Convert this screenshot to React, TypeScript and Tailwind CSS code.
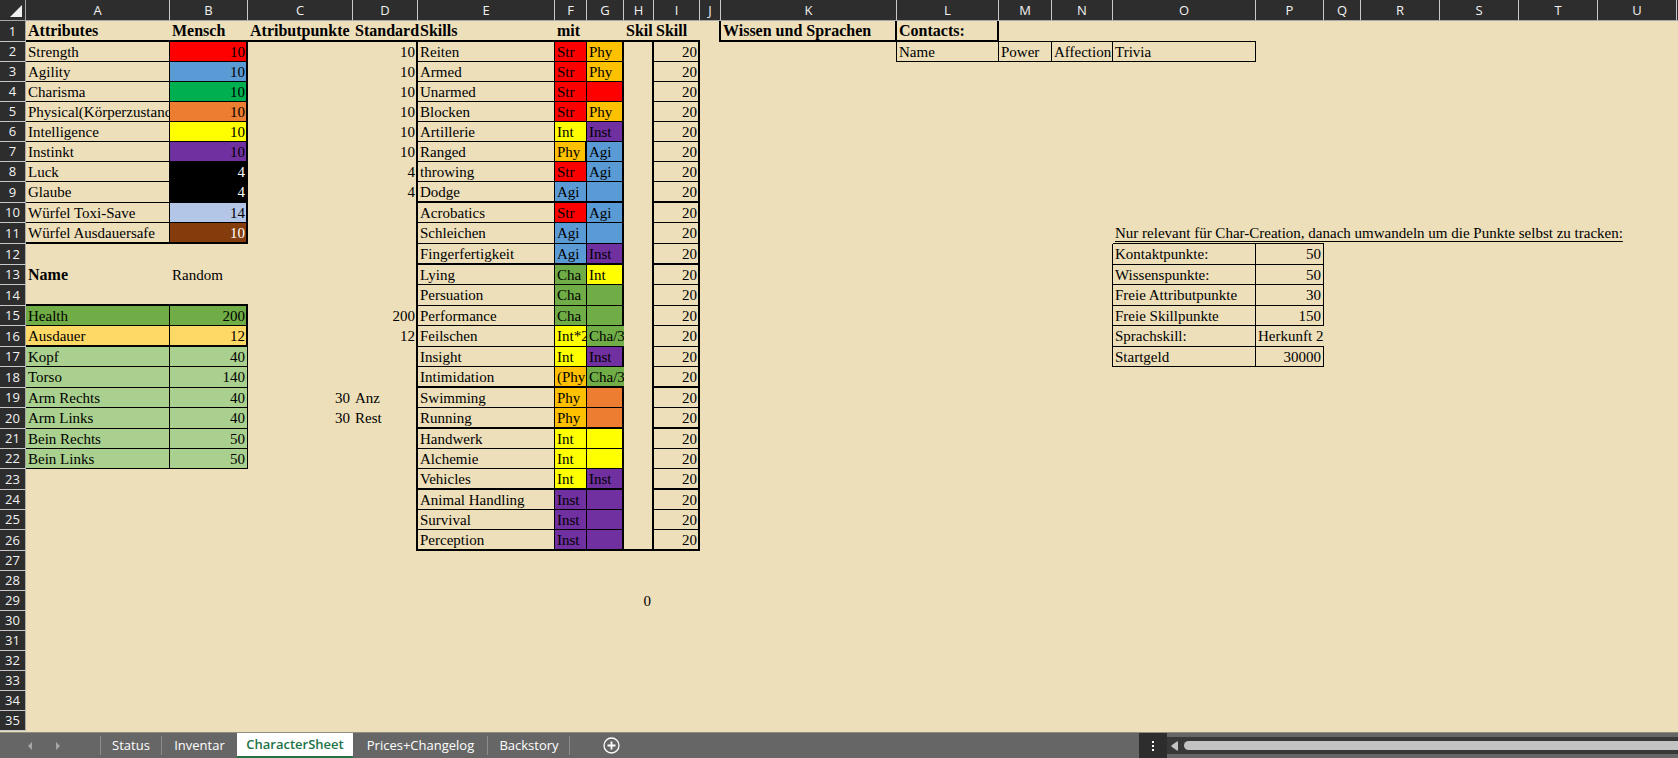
import React from "react";

type Cell = {
  text?: string;
  bg?: string;
  right?: 0 | 1 | 2;
  bottom?: 0 | 1 | 2;
  num?: boolean;
  bold?: boolean;
  white?: boolean;
  clip?: boolean;
  underline?: boolean;
};

const columns = [
  { name: "A", width: "w-[144px]" },
  { name: "B", width: "w-[78px]" },
  { name: "C", width: "w-[105px]" },
  { name: "D", width: "w-[65px]" },
  { name: "E", width: "w-[137px]" },
  { name: "F", width: "w-[32px]" },
  { name: "G", width: "w-[37px]" },
  { name: "H", width: "w-[30px]" },
  { name: "I", width: "w-[46px]" },
  { name: "J", width: "w-[21px]" },
  { name: "K", width: "w-[176px]" },
  { name: "L", width: "w-[102px]" },
  { name: "M", width: "w-[53px]" },
  { name: "N", width: "w-[61px]" },
  { name: "O", width: "w-[143px]" },
  { name: "P", width: "w-[68px]" },
  { name: "Q", width: "w-[37px]" },
  { name: "R", width: "w-[79px]" },
  { name: "S", width: "w-[79px]" },
  { name: "T", width: "w-[79px]" },
  { name: "U", width: "w-[79px]" },
];

const tallRows = [1, 9, 11, 12, 14, 16, 18, 20, 23, 26];
const groupEnds = [9, 12, 18, 20, 23, 26];

const fill = {
  red: "bg-[#ff0000]",
  blue: "bg-[#5b9bd5]",
  emerald: "bg-[#00b050]",
  orange: "bg-[#ed7d31]",
  yellow: "bg-[#ffff00]",
  purple: "bg-[#7030a0]",
  black: "bg-black",
  pale: "bg-[#b4c6e7]",
  brown: "bg-[#843c0c]",
  green: "bg-[#70ad47]",
  gold: "bg-[#ffc000]",
  sand: "bg-[#ffd966]",
  mint: "bg-[#a9d08e]",
};

const cells: Record<string, Cell> = {};
const put = (ref: string, cell: Cell) => {
  cells[ref] = { ...cells[ref], ...cell };
};

"ABCDEFGHI".split("").forEach((c) => put(c + "1", { bottom: 2, bold: true }));
put("A1", { text: "Attributes" });
put("B1", { text: "Mensch" });
put("C1", { text: "Atributpunkte" });
put("D1", { text: "Standard" });
put("E1", { text: "Skills" });
put("F1", { text: "mit" });
put("H1", { text: "Skil" });
put("I1", { text: "Skill" });

const attributes: [string, string, string, boolean?][] = [
  ["Strength", "10", fill.red],
  ["Agility", "10", fill.blue],
  ["Charisma", "10", fill.emerald],
  ["Physical(Körperzustand", "10", fill.orange],
  ["Intelligence", "10", fill.yellow],
  ["Instinkt", "10", fill.purple],
  ["Luck", "4", fill.black, true],
  ["Glaube", "4", fill.black, true],
  ["Würfel Toxi-Save", "14", fill.pale],
  ["Würfel Ausdauersafe", "10", fill.brown, true],
];
attributes.forEach(([name, value, bg, white], i) => {
  const row = i + 2;
  const bottom = row === 11 ? 2 : 1;
  put("A" + row, { text: name, right: 1, bottom, clip: true });
  put("B" + row, { text: value, bg, white, right: 2, bottom, num: true });
  if (row < 10) put("D" + row, { text: value, num: true });
});

put("A13", { text: "Name", bold: true });
put("B13", { text: "Random" });
put("A14", { bottom: 2 });
put("B14", { bottom: 2 });

const body: [string, string, string][] = [
  ["Health", "200", fill.green],
  ["Ausdauer", "12", fill.sand],
  ["Kopf", "40", fill.mint],
  ["Torso", "140", fill.mint],
  ["Arm Rechts", "40", fill.mint],
  ["Arm Links", "40", fill.mint],
  ["Bein Rechts", "50", fill.mint],
  ["Bein Links", "50", fill.mint],
];
body.forEach(([name, value, bg], i) => {
  const row = i + 15;
  const bottom = row === 16 ? 2 : 1;
  put("A" + row, { text: name, bg, right: 1, bottom });
  put("B" + row, { text: value, bg, right: row < 17 ? 2 : 1, bottom, num: true });
});
put("D15", { text: "200", num: true });
put("D16", { text: "12", num: true });
put("C19", { text: "30", num: true });
put("C20", { text: "30", num: true });
put("D19", { text: "Anz" });
put("D20", { text: "Rest" });

const skills: [string, string, string, string, string][] = [
  ["Reiten", "Str", fill.red, "Phy", fill.gold],
  ["Armed", "Str", fill.red, "Phy", fill.gold],
  ["Unarmed", "Str", fill.red, "", fill.red],
  ["Blocken", "Str", fill.red, "Phy", fill.gold],
  ["Artillerie", "Int", fill.yellow, "Inst", fill.purple],
  ["Ranged", "Phy", fill.gold, "Agi", fill.blue],
  ["throwing", "Str", fill.red, "Agi", fill.blue],
  ["Dodge", "Agi", fill.blue, "", fill.blue],
  ["Acrobatics", "Str", fill.red, "Agi", fill.blue],
  ["Schleichen", "Agi", fill.blue, "", fill.blue],
  ["Fingerfertigkeit", "Agi", fill.blue, "Inst", fill.purple],
  ["Lying", "Cha", fill.green, "Int", fill.yellow],
  ["Persuation", "Cha", fill.green, "", fill.green],
  ["Performance", "Cha", fill.green, "", fill.green],
  ["Feilschen", "Int*2", fill.yellow, "Cha/3", fill.green],
  ["Insight", "Int", fill.yellow, "Inst", fill.purple],
  ["Intimidation", "(Phy", fill.gold, "Cha/3", fill.green],
  ["Swimming", "Phy", fill.gold, "", fill.orange],
  ["Running", "Phy", fill.gold, "", fill.orange],
  ["Handwerk", "Int", fill.yellow, "", fill.yellow],
  ["Alchemie", "Int", fill.yellow, "", fill.yellow],
  ["Vehicles", "Int", fill.yellow, "Inst", fill.purple],
  ["Animal Handling", "Inst", fill.purple, "", fill.purple],
  ["Survival", "Inst", fill.purple, "", fill.purple],
  ["Perception", "Inst", fill.purple, "", fill.purple],
];
skills.forEach(([name, first, firstBg, second, secondBg], i) => {
  const row = i + 2;
  const bottom = groupEnds.includes(row) ? 2 : 1;
  put("D" + row, { right: 2 });
  put("E" + row, { text: name, right: 1, bottom });
  put("F" + row, { text: first, bg: firstBg, right: row === 7 ? 2 : 1, bottom, clip: true });
  put("G" + row, { text: second, bg: secondBg, right: second === "Cha/3" ? 0 : 2, bottom, clip: true });
  put("H" + row, { right: 2, bottom: row === 26 ? 2 : 0 });
  put("I" + row, { text: "20", right: 2, bottom, num: true });
});
put("H29", { text: "0", num: true });

put("J1", { right: 2 });
put("K1", { text: "Wissen und Sprachen", bold: true, right: 2, bottom: 2 });
put("L1", { text: "Contacts:", bold: true, right: 2, bottom: 2 });
put("M1", { bottom: 1 });
put("N1", { bottom: 1 });
put("O1", { bottom: 1 });
put("K2", { right: 1 });
put("L2", { text: "Name", right: 1, bottom: 1 });
put("M2", { text: "Power", right: 1, bottom: 1 });
put("N2", { text: "Affection", right: 1, bottom: 1 });
put("O2", { text: "Trivia", right: 1, bottom: 1 });

put("O11", {
  text: "Nur relevant für Char-Creation, danach umwandeln um die Punkte selbst zu tracken:",
  bottom: 1,
  underline: true,
});
put("P11", { bottom: 1 });
const points: [string, string][] = [
  ["Kontaktpunkte:", "50"],
  ["Wissenspunkte:", "50"],
  ["Freie Attributpunkte", "30"],
  ["Freie Skillpunkte", "150"],
  ["Sprachskill:", "Herkunft 2"],
  ["Startgeld", "30000"],
];
points.forEach(([name, value], i) => {
  const row = i + 12;
  const isText = value === "Herkunft 2";
  put("N" + row, { right: 1 });
  put("O" + row, { text: name, right: 1, bottom: 1 });
  put("P" + row, { text: value, right: isText ? 0 : 1, bottom: 1, num: !isText });
});

const rightBorder = ["", "border-r", "border-r-2"];
const bottomBorder = ["", "border-b", "border-b-2"];
// Numbers end on the same line whatever the width of the cell's right border.
const numberPadding = ["pr-[3px]", "pr-[2px]", "pr-px"];

function SheetCell({ cell = {} }: { cell?: Cell }) {
  const right = cell.right ?? 0;
  const classes = [
    "border-black p-0 pt-px align-top whitespace-nowrap leading-[18px]",
    rightBorder[right],
    bottomBorder[cell.bottom ?? 0],
    cell.bg ?? "",
    cell.num ? "text-right " + numberPadding[right] : "pl-[2px] text-left",
    cell.bold ? "text-[16px] font-bold" : "text-[15px]",
    cell.white ? "text-white" : "text-black",
    cell.clip ? "overflow-hidden" : "",
  ].join(" ");
  return (
    <td className={classes}>
      {cell.underline ? <span className="underline underline-offset-[3px]">{cell.text}</span> : cell.text}
    </td>
  );
}

function Sheet() {
  return (
    <table className="w-full table-fixed border-separate border-spacing-0 font-['Liberation_Serif',serif]">
      <colgroup>
        <col className="w-[26px]" />
        {columns.map((c) => (
          <col key={c.name} className={c.width} />
        ))}
        <col />
      </colgroup>
      <thead className="bg-[#2d2d2d] font-['Open_Sans',sans-serif] text-[13px] text-[#f2f2f2]">
        <tr className="h-[21px]">
          <th className="border-r border-b border-[#a8a8a8] p-0">
            <svg viewBox="0 0 12 12" className="mt-px mr-[3px] ml-auto size-3" aria-label="Select all">
              <path d="M12 0V12H0Z" fill="#f0f0f0" />
            </svg>
          </th>
          {columns.map((c) => (
            <th
              key={c.name}
              scope="col"
              className="border-r border-b border-r-[#c8c8c8] border-b-[#a8a8a8] p-0 leading-5 font-normal"
            >
              {c.name}
            </th>
          ))}
          <td className="border-b border-[#a8a8a8] p-0" />
        </tr>
      </thead>
      <tbody>
        {Array.from({ length: 35 }, (_, i) => i + 1).map((row) => (
          <tr key={row} className={tallRows.includes(row) ? "h-[21px]" : "h-5"}>
            <th
              scope="row"
              className="border-r border-b border-r-[#a8a8a8] border-b-[#c8c8c8] bg-[#2d2d2d] p-0 font-['Open_Sans',sans-serif] text-[13px] leading-[19px] font-normal text-[#f2f2f2]"
            >
              {row}
            </th>
            {columns.map((c) => (
              <SheetCell key={c.name} cell={cells[c.name + row]} />
            ))}
            <td className="p-0" />
          </tr>
        ))}
      </tbody>
    </table>
  );
}

const tabs = [
  { name: "Status", width: "w-[62px]" },
  { name: "Inventar", width: "w-[75px]" },
  { name: "CharacterSheet", width: "w-[116px]" },
  { name: "Prices+Changelog", width: "w-[135px]" },
  { name: "Backstory", width: "w-[82px]" },
];

function TabBar() {
  return (
    <footer className="flex h-[26px] shrink-0 border-t border-[#8f8d80] bg-[#666666] font-['Open_Sans',sans-serif] text-[13px] text-white">
      <div className="flex w-[100px] shrink-0 items-center pl-[26px]">
        <button aria-label="Previous sheets" className="flex w-7 items-center">
          <svg viewBox="0 0 6 8" className="ml-px h-2 w-[6px]">
            <path d="M5 0V8L1 4Z" fill="#a6a6a6" />
          </svg>
        </button>
        <button aria-label="Next sheets" className="flex w-7 items-center">
          <svg viewBox="0 0 6 8" className="ml-px h-2 w-[6px]">
            <path d="M1 0V8L5 4Z" fill="#a6a6a6" />
          </svg>
        </button>
      </div>
      <nav className="flex shrink-0">
        {tabs.map((tab) =>
          tab.name === "CharacterSheet" ? (
            <button
              key={tab.name}
              aria-current="page"
              className={"border-b-2 border-[#217346] bg-white text-center font-semibold text-[#217346] " + tab.width}
            >
              {tab.name}
            </button>
          ) : (
            <button key={tab.name} className={"relative text-center " + tab.width}>
              {tab.name}
              {tab.name !== "Inventar" && (
                <span className="absolute top-[3px] right-0 h-[19px] w-px bg-[#8c8c8c]" />
              )}
              {tab.name === "Status" && (
                <span className="absolute top-[3px] left-0 h-[19px] w-px bg-[#8c8c8c]" />
              )}
            </button>
          ),
        )}
      </nav>
      <button aria-label="New sheet" className="ml-[33px] flex shrink-0 items-center">
        <svg viewBox="0 0 17 17" className="size-[17px]" fill="none" stroke="#ffffff">
          <circle cx="8.5" cy="8.5" r="7.5" strokeWidth="1.3" />
          <path d="M8.5 4.5V12.5M4.5 8.5H12.5" strokeWidth="1.8" />
        </svg>
      </button>
      <div className="flex min-w-0 flex-1 justify-end">
        <div className="flex w-[539px] min-w-0">
          <button aria-label="Resize tab bar" className="flex w-7 shrink-0 items-center justify-center bg-[#2d2d2d]">
            <svg viewBox="0 0 2 10" className="h-[10px] w-[2px]" fill="#ffffff">
              <path d="M0 0H2V2H0ZM0 4H2V6H0ZM0 8H2V10H0Z" />
            </svg>
          </button>
          <div className="mt-1 flex h-[17px] flex-1 items-center bg-[#383838] pl-1">
            <button aria-label="Scroll left" className="mr-[6px]">
              <svg viewBox="0 0 7 10" className="block h-[10px] w-[7px]">
                <path d="M7 1.2Q7 0 6 .5L.6 4.3Q0 5 .6 5.7L6 9.5Q7 10 7 8.8Z" fill="#c3c3c3" />
              </svg>
            </button>
            <div className="h-[9px] flex-1 rounded-l-full bg-[#c3c3c3]" />
          </div>
        </div>
      </div>
    </footer>
  );
}

export default function App() {
  return (
    <div className="flex h-screen flex-col overflow-hidden bg-[#eddfba]">
      <main className="min-h-0 flex-1 overflow-hidden">
        <Sheet />
      </main>
      <TabBar />
    </div>
  );
}
